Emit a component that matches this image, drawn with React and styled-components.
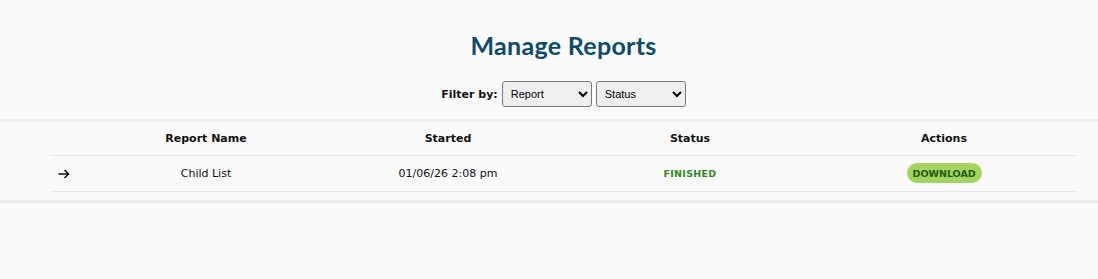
import React from 'react';
import styled, { createGlobalStyle } from 'styled-components';

const GlobalStyle = createGlobalStyle`
  html, body {
    margin: 0;
    padding: 0;
    background: #fafafa;
  }
  body {
    font-family: 'DejaVu Sans', Verdana, sans-serif;
    color: #111;
  }
`;

const Page = styled.div`
  display: flex;
  flex-direction: column;
  width: 100%;
  min-height: 279px;
  background: #fafafa;
`;

const Content = styled.div`
  padding-left: 29px;
`;

const Title = styled.h1`
  margin: 0;
  padding-top: 31px;
  font-family: 'Lato', 'Open Sans', sans-serif;
  font-size: 25px;
  font-weight: 700;
  line-height: 29px;
  text-align: center;
  color: #0d4a6c;
  letter-spacing: 0.3px;
`;

const FilterBar = styled.div`
  display: flex;
  align-items: center;
  justify-content: center;
  gap: 4px;
  margin-top: 21px;
  margin-bottom: 12px;
`;

const FilterLabel = styled.span`
  font-size: 11px;
  font-weight: 700;
`;

const Select = styled.select`
  width: 90px;
  height: 26px;
  padding: 0 4px;
  font-family: 'Liberation Sans', Arial, sans-serif;
  font-size: 11px;
  color: #000;
  background: #efefef;
  border: 1px solid #767676;
  border-radius: 3px;
`;

const Rule = styled.div`
  height: 3px;
  background: #eeebe8;
`;

const Table = styled.div`
  margin: 0 21px 8px 21px;
`;

const Row = styled.div`
  display: grid;
  grid-template-columns: 35px 242px 242px 242px 1fr;
  align-items: center;
  height: ${props => (props.head ? '33px' : '35px')};
  border-bottom: 1px solid #e8e6e4;
  font-size: 11px;
  font-weight: ${props => (props.head ? 700 : 400)};
`;

const Cell = styled.div`
  display: flex;
  justify-content: ${props => (props.left ? 'flex-start' : 'center')};
  align-items: center;
  padding-left: ${props => (props.left ? '8px' : '0')};
  padding-bottom: ${props => (props.left ? '0' : '1px')};
`;

const StatusText = styled.span`
  font-size: 9.5px;
  font-weight: 700;
  color: #2f8a1f;
  letter-spacing: 0.3px;
`;

const DownloadButton = styled.button`
  width: 75px;
  height: 20px;
  border: none;
  border-radius: 10px;
  background: #a3d45f;
  color: #1e5a12;
  font-family: 'DejaVu Sans', Verdana, sans-serif;
  font-size: 9.5px;
  font-weight: 700;
  cursor: pointer;
`;

const Arrow = () => (
  <svg width="12" height="10" viewBox="0 0 12 10" fill="none" stroke="#000" strokeWidth="1.4">
    <path d="M0.5 5h10" />
    <path d="M6.5 1l4 4-4 4" />
  </svg>
);

const rows = [
  { name: 'Child List', started: '01/06/26 2:08 pm', status: 'FINISHED' },
];

export default function App() {
  return (
    <Page>
      <GlobalStyle />
      <Content>
        <Title>Manage Reports</Title>
        <FilterBar>
          <FilterLabel>Filter by:</FilterLabel>
          <Select defaultValue="report">
            <option value="report">Report</option>
          </Select>
          <Select defaultValue="status">
            <option value="status">Status</option>
          </Select>
        </FilterBar>
      </Content>
      <Rule />
      <Content>
        <Table>
          <Row head>
            <Cell />
            <Cell>Report Name</Cell>
            <Cell>Started</Cell>
            <Cell>Status</Cell>
            <Cell>Actions</Cell>
          </Row>
          {rows.map(r => (
            <Row key={r.name}>
              <Cell left>
                <Arrow />
              </Cell>
              <Cell>{r.name}</Cell>
              <Cell>{r.started}</Cell>
              <Cell>
                <StatusText>{r.status}</StatusText>
              </Cell>
              <Cell>
                <DownloadButton>DOWNLOAD</DownloadButton>
              </Cell>
            </Row>
          ))}
        </Table>
      </Content>
      <Rule />
    </Page>
  );
}
